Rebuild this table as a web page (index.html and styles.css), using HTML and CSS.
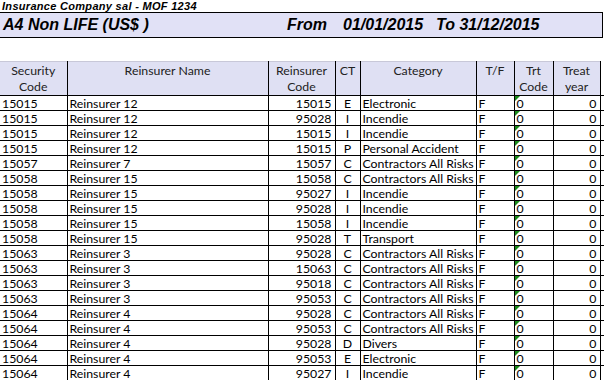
FILE: index.html
```html
<!DOCTYPE html>
<html>
<head>
<meta charset="utf-8">
<link rel="stylesheet" href="styles.css">
</head>
<body>
<div class="company">Insurance Company sal - MOF 1234</div>
<div class="band">
  <span class="band-title">A4 Non LIFE (US$ )</span>
  <span class="band-from">From</span>
  <span class="band-date">01/01/2015</span>
  <span class="band-to">To 31/12/2015</span>
</div>
<table class="grid">
  <colgroup>
    <col class="c-sec"><col class="c-name"><col class="c-code"><col class="c-ct"><col class="c-cat"><col class="c-tf"><col class="c-trt"><col class="c-year"><col class="c-more">
  </colgroup>
  <thead>
    <tr>
      <th>Security<br>Code</th>
      <th>Reinsurer Name</th>
      <th>Reinsurer<br>Code</th>
      <th>CT</th>
      <th>Category</th>
      <th>T/F</th>
      <th>Trt<br>Code</th>
      <th>Treat<br>year</th>
      <th></th>
    </tr>
  </thead>
  <tbody id="rows">
    <tr><td>15015</td><td>Reinsurer 12</td><td class="r">15015</td><td class="c">E</td><td>Electronic</td><td>F</td><td class="trt">0</td><td class="r">0</td><td></td></tr>
    <tr><td>15015</td><td>Reinsurer 12</td><td class="r">95028</td><td class="c">I</td><td>Incendie</td><td>F</td><td class="trt">0</td><td class="r">0</td><td></td></tr>
    <tr><td>15015</td><td>Reinsurer 12</td><td class="r">15015</td><td class="c">I</td><td>Incendie</td><td>F</td><td class="trt">0</td><td class="r">0</td><td></td></tr>
    <tr><td>15015</td><td>Reinsurer 12</td><td class="r">15015</td><td class="c">P</td><td>Personal Accident</td><td>F</td><td class="trt">0</td><td class="r">0</td><td></td></tr>
    <tr><td>15057</td><td>Reinsurer 7</td><td class="r">15057</td><td class="c">C</td><td>Contractors All Risks</td><td>F</td><td class="trt">0</td><td class="r">0</td><td></td></tr>
    <tr><td>15058</td><td>Reinsurer 15</td><td class="r">15058</td><td class="c">C</td><td>Contractors All Risks</td><td>F</td><td class="trt">0</td><td class="r">0</td><td></td></tr>
    <tr><td>15058</td><td>Reinsurer 15</td><td class="r">95027</td><td class="c">I</td><td>Incendie</td><td>F</td><td class="trt">0</td><td class="r">0</td><td></td></tr>
    <tr><td>15058</td><td>Reinsurer 15</td><td class="r">95028</td><td class="c">I</td><td>Incendie</td><td>F</td><td class="trt">0</td><td class="r">0</td><td></td></tr>
    <tr><td>15058</td><td>Reinsurer 15</td><td class="r">15058</td><td class="c">I</td><td>Incendie</td><td>F</td><td class="trt">0</td><td class="r">0</td><td></td></tr>
    <tr><td>15058</td><td>Reinsurer 15</td><td class="r">95028</td><td class="c">T</td><td>Transport</td><td>F</td><td class="trt">0</td><td class="r">0</td><td></td></tr>
    <tr><td>15063</td><td>Reinsurer 3</td><td class="r">95028</td><td class="c">C</td><td>Contractors All Risks</td><td>F</td><td class="trt">0</td><td class="r">0</td><td></td></tr>
    <tr><td>15063</td><td>Reinsurer 3</td><td class="r">15063</td><td class="c">C</td><td>Contractors All Risks</td><td>F</td><td class="trt">0</td><td class="r">0</td><td></td></tr>
    <tr><td>15063</td><td>Reinsurer 3</td><td class="r">95018</td><td class="c">C</td><td>Contractors All Risks</td><td>F</td><td class="trt">0</td><td class="r">0</td><td></td></tr>
    <tr><td>15063</td><td>Reinsurer 3</td><td class="r">95053</td><td class="c">C</td><td>Contractors All Risks</td><td>F</td><td class="trt">0</td><td class="r">0</td><td></td></tr>
    <tr><td>15064</td><td>Reinsurer 4</td><td class="r">95028</td><td class="c">C</td><td>Contractors All Risks</td><td>F</td><td class="trt">0</td><td class="r">0</td><td></td></tr>
    <tr><td>15064</td><td>Reinsurer 4</td><td class="r">95053</td><td class="c">C</td><td>Contractors All Risks</td><td>F</td><td class="trt">0</td><td class="r">0</td><td></td></tr>
    <tr><td>15064</td><td>Reinsurer 4</td><td class="r">95028</td><td class="c">D</td><td>Divers</td><td>F</td><td class="trt">0</td><td class="r">0</td><td></td></tr>
    <tr><td>15064</td><td>Reinsurer 4</td><td class="r">95053</td><td class="c">E</td><td>Electronic</td><td>F</td><td class="trt">0</td><td class="r">0</td><td></td></tr>
    <tr><td>15064</td><td>Reinsurer 4</td><td class="r">95027</td><td class="c">I</td><td>Incendie</td><td>F</td><td class="trt">0</td><td class="r">0</td><td></td></tr>
  </tbody>
</table>
</body>
</html>
```

FILE: styles.css
```css
html, body {
  margin: 0;
  padding: 0;
  background: #ffffff;
  overflow: hidden;
}
body {
  width: 604px;
  height: 380px;
  font-family: Lato, "Liberation Sans", sans-serif;
  color: #000;
}
.company {
  height: 12px;
  line-height: 12px;
  padding-left: 2px;
  font-family: "Liberation Sans", Arial, sans-serif;
  font-weight: bold;
  font-style: italic;
  font-size: 11px;
  letter-spacing: 0.3px;
  white-space: nowrap;
}
.band {
  box-sizing: border-box;
  width: 603px;
  height: 26px;
  border: 1px solid #000;
  border-left: none;
  background: #e1e1f6;
  display: flex;
  align-items: center;
  padding-left: 3px;
  font-family: "Liberation Sans", Arial, sans-serif;
  font-weight: bold;
  font-style: italic;
  font-size: 16px;
  white-space: nowrap;
}
.band-title { width: 284px; }
.band-from { width: 56px; }
.band-date { width: 93px; }
.grid {
  margin-top: 23px;
  border-collapse: collapse;
  table-layout: fixed;
  width: 620px;
  font-size: 12.3px;
}
.c-sec { width: 67px; }
.c-name { width: 201px; }
.c-code { width: 67px; }
.c-ct { width: 25px; }
.c-cat { width: 116px; }
.c-tf { width: 38px; }
.c-trt { width: 39px; }
.c-year { width: 47px; }
.c-more { width: 20px; }
.grid th {
  background: #dfe0f3;
  border: 1px solid #000;
  border-top: 1px solid #c8c8d8;
  height: 32px;
  padding: 1px 0 0;
  vertical-align: top;
  text-align: center;
  font-weight: normal;
  color: #222;
  line-height: 16px;
}
.grid th:first-child { border-left: none; }
.grid th:last-child { background: #fff; border-top: none; border-right: none; }
.grid td {
  height: 13px;
  padding: 1px 2px 0;
  border: 1px solid #000;
  line-height: 13px;
  white-space: nowrap;
  overflow: hidden;
}
.grid td:first-child { border-left: none; }
.grid td:last-child { border-right: none; }
.grid td.r { text-align: right; padding-right: 3px; }
.grid td.c { text-align: center; }
.grid td.trt { position: relative; }
.grid td.trt::before {
  content: "";
  position: absolute;
  left: 0;
  top: 0;
  width: 0;
  height: 0;
  border-top: 5px solid #1a8a1a;
  border-right: 5px solid transparent;
}
```
